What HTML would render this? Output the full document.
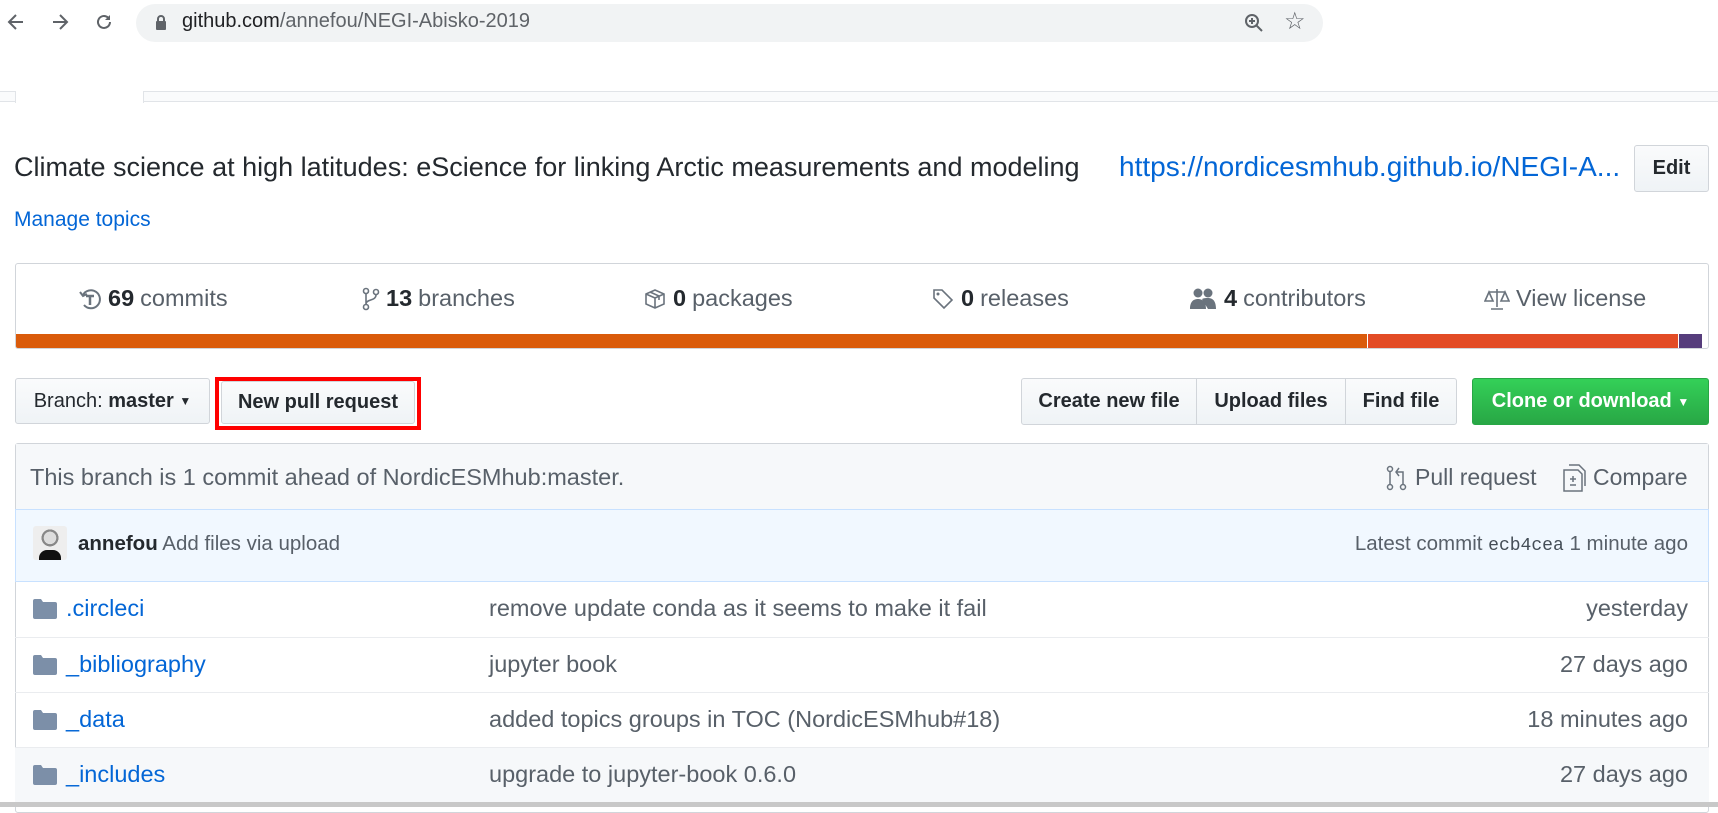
<!DOCTYPE html>
<html><head><meta charset="utf-8"><style>
*{box-sizing:border-box;margin:0;padding:0}
body{width:1718px;height:807px;overflow:hidden;background:#fff;font-family:"Liberation Sans",Arial,sans-serif;color:#24292e;position:relative}
.a{position:absolute;white-space:nowrap}
.btn{position:absolute;border:1px solid #d1d5da;background:linear-gradient(#fafbfc,#eff3f6);border-radius:3px;font-size:19px;font-weight:bold;color:#24292e;display:flex;align-items:center;justify-content:center}
.stat{position:absolute;top:285px;font-size:23.5px;color:#586069;display:flex;align-items:center;gap:6px}
.stat b{color:#24292e}
.row{position:absolute;left:15px;width:1694px;height:55px;border-top:1px solid #eaecef;font-size:23.5px}
.row .n{position:absolute;left:51px;top:13px;color:#0366d6}
.row .m{position:absolute;left:474px;top:13px;color:#586069}
.row .d{position:absolute;right:21px;top:13px;color:#586069}
.row svg{position:absolute;left:18px;top:17px}
</style></head><body>
<svg class="a" style="left:6px;top:12px" width="20" height="20" viewBox="0 0 20 20"><path d="M17 10H4M10 3L3 10l7 7" stroke="#5f6368" stroke-width="2" fill="none"/></svg>
<svg class="a" style="left:50px;top:12px" width="20" height="20" viewBox="0 0 20 20"><path d="M3 10h13M10 3l7 7-7 7" stroke="#5f6368" stroke-width="2" fill="none"/></svg>
<svg class="a" style="left:94px;top:12px" width="20" height="20" viewBox="0 0 20 20"><path d="M16 10a6 6 0 1 1-2-4.5" stroke="#5f6368" stroke-width="2" fill="none"/><path d="M16 3v5h-5z" fill="#5f6368"/></svg>
<div class="a" style="left:136px;top:4px;width:1187px;height:38px;border-radius:19px;background:#f1f3f4"></div>
<svg class="a" style="left:155px;top:15px" width="12" height="16" viewBox="0 0 12 16"><rect x="1" y="6" width="10" height="9" rx="1" fill="#5f6368"/><path d="M3 6V4a3 3 0 0 1 6 0v2" stroke="#5f6368" stroke-width="2" fill="none"/></svg>
<div class="a" style="left:182px;top:10px;font-size:20px;color:#202124">github.com<span style="color:#5f6368">/annefou/NEGI-Abisko-2019</span></div>
<svg class="a" style="left:1243px;top:12px" width="22" height="22" viewBox="0 0 22 22"><circle cx="9" cy="9" r="6" stroke="#5f6368" stroke-width="2" fill="none"/><path d="M13.5 13.5L19 19M9 6v6M6 9h6" stroke="#5f6368" stroke-width="2"/></svg>
<div class="a" style="left:1284px;top:7px;font-size:24px;color:#5f6368">☆</div>
<div class="a" style="left:0;top:91px;width:1718px;height:1px;background:#e1e4e8"></div>
<div class="a" style="left:0;top:92px;width:1718px;height:10px;background:#fafbfc;border-bottom:1px solid #e1e4e8"></div>
<div class="a" style="left:15px;top:91px;width:129px;height:12px;background:#fff;border-left:1px solid #e1e4e8;border-right:1px solid #e1e4e8"></div>
<div class="a" style="left:14px;top:152px;font-size:27px;color:#24292e">Climate science at high latitudes: eScience for linking Arctic measurements and modeling</div>
<div class="a" style="left:1119px;top:151px;font-size:28px;color:#0366d6;width:505px;overflow:hidden">https://nordicesmhub.github.io/NEGI-A...</div>
<div class="btn" style="left:1634px;top:145px;width:75px;height:47px;font-size:20px">Edit</div>
<div class="a" style="left:14px;top:208px;font-size:21px;color:#0366d6">Manage topics</div>
<div class="a" style="left:15px;top:263px;width:1694px;height:86px;border:1px solid #d1d5da;border-radius:3px;overflow:hidden">
<div style="position:absolute;left:0;bottom:0;height:14px;width:1351px;background:#da5b0b"></div>
<div style="position:absolute;left:1352px;bottom:0;height:14px;width:310px;background:#e34c26"></div>
<div style="position:absolute;left:1663px;bottom:0;height:14px;width:23px;background:#563d7c"></div>
</div>
<div class="stat" style="left:78px"><svg width="24" height="24" viewBox="0 0 24 24"><path d="M5 8a9 9 0 1 1 1 10" stroke="#6a737d" stroke-width="2" fill="none"/><path d="M2 5l3 4 4-2" stroke="#6a737d" stroke-width="2" fill="none"/><path d="M8 9h8M12 9v9" stroke="#6a737d" stroke-width="2.5"/></svg><b>69</b> commits</div>
<div class="stat" style="left:362px"><svg width="18" height="24" viewBox="0 0 18 24"><circle cx="4" cy="4" r="2.5" stroke="#6a737d" stroke-width="1.6" fill="none"/><circle cx="4" cy="20" r="2.5" stroke="#6a737d" stroke-width="1.6" fill="none"/><circle cx="14" cy="5" r="2.5" stroke="#6a737d" stroke-width="1.6" fill="none"/><path d="M4 7v10M14 8c0 6-10 4-10 9" stroke="#6a737d" stroke-width="1.6" fill="none"/></svg><b>13</b> branches</div>
<div class="stat" style="left:643px"><svg width="24" height="24" viewBox="0 0 24 24"><path d="M3 7l9-4 9 4v10l-9 4-9-4zM3 7l9 4 9-4M12 11v10M7 5l9 4v4" stroke="#6a737d" stroke-width="1.6" fill="none"/></svg><b>0</b> packages</div>
<div class="stat" style="left:931px"><svg width="24" height="24" viewBox="0 0 24 24"><path d="M3 3h8l10 10-8 8L3 11z" stroke="#6a737d" stroke-width="1.6" fill="none"/><circle cx="7" cy="7" r="1.5" fill="#6a737d"/></svg><b>0</b> releases</div>
<div class="stat" style="left:1188px"><svg width="30" height="24" viewBox="0 0 30 24"><circle cx="10" cy="6" r="4.5" fill="#6a737d"/><circle cx="20" cy="6" r="4.5" fill="#6a737d"/><path d="M2 22c0-8 4-10 8-10s8 2 8 10zM14 12c2-1 4-1 6-1 4 0 8 2 8 11h-8" fill="#6a737d"/></svg><b>4</b> contributors</div>
<div class="stat" style="left:1484px"><svg width="26" height="24" viewBox="0 0 26 24"><path d="M13 2v18M5 5h16M7 22h12M5 5l-4 9h8zM21 5l-4 9h8z" stroke="#6a737d" stroke-width="1.6" fill="none"/></svg>View license</div>
<div class="btn" style="left:15px;top:378px;width:195px;height:46px;font-weight:normal;color:#24292e;font-size:20px">Branch:&nbsp;<b>master</b>&nbsp;<span style="font-size:12px">▼</span></div>
<div class="a" style="left:215px;top:377px;width:206px;height:53px;border:4px solid #f00"></div>
<div class="btn" style="left:221px;top:381px;width:194px;height:43px;font-size:20px">New pull request</div>
<div class="btn" style="left:1021px;top:378px;width:176px;height:47px;border-radius:3px 0 0 3px;font-size:20px">Create new file</div>
<div class="btn" style="left:1196px;top:378px;width:150px;height:47px;border-radius:0;font-size:20px">Upload files</div>
<div class="btn" style="left:1345px;top:378px;width:112px;height:47px;border-radius:0 3px 3px 0;font-size:20px">Find file</div>
<div class="btn" style="left:1472px;top:378px;width:237px;height:47px;background:linear-gradient(#34d058,#28a745);border-color:#28a745;color:#fff;font-size:20px">Clone or download&nbsp;<span style="font-size:12px">▼</span></div>
<div class="a" style="left:15px;top:443px;width:1694px;height:370px;border:1px solid #d1d5da;border-radius:3px;background:#fff"></div>
<div class="a" style="left:16px;top:444px;width:1692px;height:65px;background:#f6f8fa"></div>
<div class="a" style="left:30px;top:464px;font-size:23.5px;color:#586069">This branch is 1 commit ahead of NordicESMhub:master.</div>
<svg class="a" style="left:1386px;top:465px" width="22" height="26" viewBox="0 0 22 26"><circle cx="4" cy="4" r="2.5" stroke="#6a737d" stroke-width="1.5" fill="none"/><circle cx="4" cy="22" r="2.5" stroke="#6a737d" stroke-width="1.5" fill="none"/><circle cx="17" cy="22" r="2.5" stroke="#6a737d" stroke-width="1.5" fill="none"/><path d="M4 7v12M17 19V7h-7M13 3l-3 4 3 4" stroke="#6a737d" stroke-width="1.5" fill="none"/></svg>
<div class="a" style="left:1415px;top:464px;font-size:23px;color:#586069">Pull request</div>
<svg class="a" style="left:1563px;top:464px" width="24" height="28" viewBox="0 0 24 28"><path d="M1 6h14l4 4v17H1z" stroke="#6a737d" stroke-width="1.5" fill="none"/><path d="M6 1h10l6 6v15" stroke="#6a737d" stroke-width="1.5" fill="none"/><path d="M10 12v6M7 15h6M7 21h6" stroke="#6a737d" stroke-width="1.5"/></svg>
<div class="a" style="left:1593px;top:464px;font-size:23px;color:#586069">Compare</div>
<div class="a" style="left:15px;top:509px;width:1694px;height:73px;background:#f1f8ff;border:1px solid #c8e1ff"></div>
<div class="a" style="left:33px;top:526px;width:34px;height:34px;border-radius:3px;background:radial-gradient(circle at 50% 35%,#ddd 0 22%,#888 23% 30%,#eee 31%);overflow:hidden"><div style="position:absolute;left:6px;bottom:0;width:22px;height:10px;background:#111;border-radius:8px 8px 0 0"></div></div>
<div class="a" style="left:78px;top:532px;font-size:20.5px;color:#586069"><span style="color:#24292e;font-weight:bold">annefou</span> Add files via upload</div>
<div class="a" style="right:30px;top:532px;font-size:20.5px;color:#586069">Latest commit <span style="font-family:'Liberation Mono',monospace;font-size:18px;color:#444d56">ecb4cea</span> 1 minute ago</div>
<div class="row" style="top:582px;border-top:none"><svg width="24" height="20" viewBox="0 0 24 20"><path d="M0 2q0-2 2-2h6l2 3h12q2 0 2 2v13q0 2-2 2H2q-2 0-2-2z" fill="#7c8fa8"/></svg><span class="n">.circleci</span><span class="m">remove update conda as it seems to make it fail</span><span class="d">yesterday</span></div>
<div class="row" style="top:637px"><svg width="24" height="20" viewBox="0 0 24 20"><path d="M0 2q0-2 2-2h6l2 3h12q2 0 2 2v13q0 2-2 2H2q-2 0-2-2z" fill="#7c8fa8"/></svg><span class="n">_bibliography</span><span class="m">jupyter book</span><span class="d">27 days ago</span></div>
<div class="row" style="top:692px"><svg width="24" height="20" viewBox="0 0 24 20"><path d="M0 2q0-2 2-2h6l2 3h12q2 0 2 2v13q0 2-2 2H2q-2 0-2-2z" fill="#7c8fa8"/></svg><span class="n">_data</span><span class="m">added topics groups in TOC (NordicESMhub#18)</span><span class="d">18 minutes ago</span></div>
<div class="row" style="top:747px;background:#f6f8fa"><svg width="24" height="20" viewBox="0 0 24 20"><path d="M0 2q0-2 2-2h6l2 3h12q2 0 2 2v13q0 2-2 2H2q-2 0-2-2z" fill="#7c8fa8"/></svg><span class="n">_includes</span><span class="m">upgrade to jupyter-book 0.6.0</span><span class="d">27 days ago</span></div>
<div class="a" style="left:0;top:802px;width:1718px;height:5px;background:#c8c8c8"></div>
</body></html>
